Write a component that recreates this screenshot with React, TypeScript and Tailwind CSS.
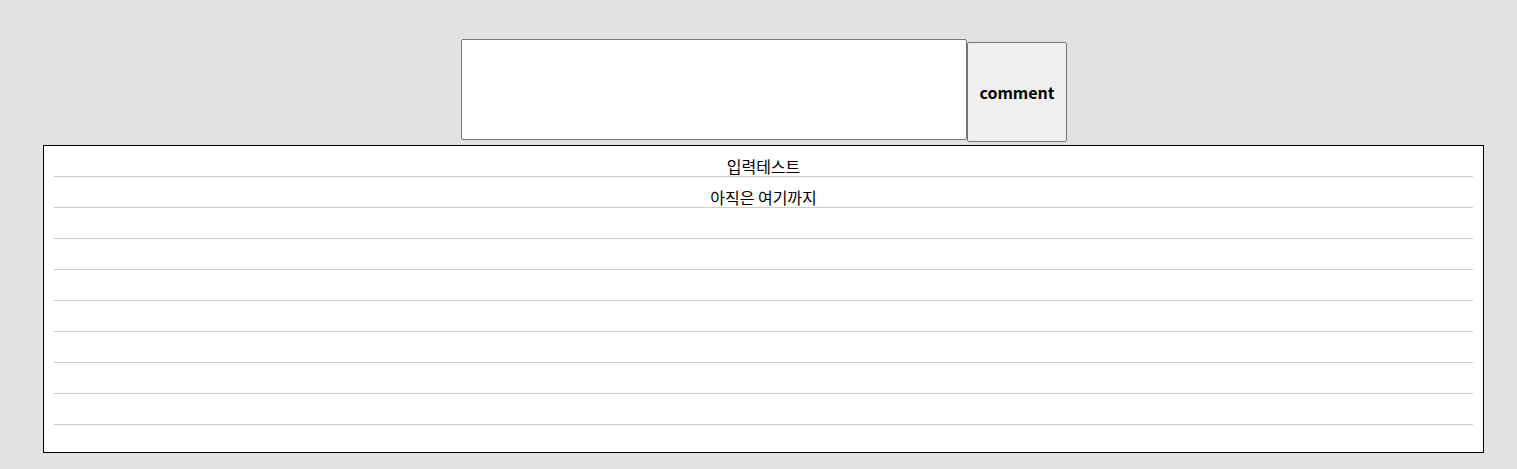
import { useState } from "react";

const comments = ["입력테스트", "아직은 여기까지", "", "", "", "", "", "", ""];

export default function App() {
  const [text, setText] = useState("");

  return (
    <div
      className="min-h-[469px] w-full bg-[#e2e2e2] pt-[39px]"
      style={{ fontFamily: '"Noto Sans CJK KR", sans-serif' }}
    >
      <div className="flex items-start justify-center pl-[11px]">
        <textarea
          value={text}
          onChange={(e) => setText(e.target.value)}
          className="h-[101px] w-[506px] resize-none rounded-[2px] border border-[#767676] bg-white"
        />
        <button
          type="button"
          className="mt-[3px] h-[100px] w-[100px] rounded-[2px] border border-[#767676] bg-[#efefef] text-base font-bold text-black"
        >
          comment
        </button>
      </div>

      <div className="ml-[43px] mt-[3px] w-[1441px] border border-black bg-white px-[10px] pb-[27px]">
        <ul>
          {comments.map((comment, i) => (
            <li
              key={i}
              className="flex h-[31px] items-end justify-center border-b border-[#cccccc] text-base leading-[20px] text-black"
            >
              {comment}
            </li>
          ))}
        </ul>
      </div>
    </div>
  );
}
